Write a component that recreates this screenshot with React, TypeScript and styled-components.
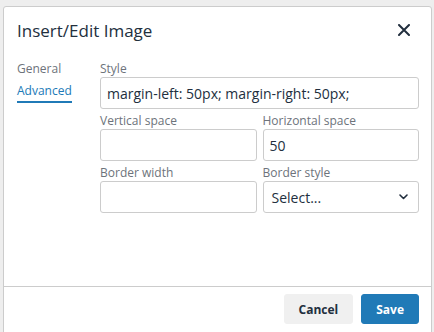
import React from "react";
import styled, { createGlobalStyle } from "styled-components";

const GlobalStyle = createGlobalStyle`
  html, body {
    margin: 0;
    padding: 0;
  }
  body {
    background: #eeeeee;
    font-family: "Open Sans", "Noto Sans", sans-serif;
    overflow: hidden;
  }
  * { box-sizing: border-box; }
`;

const Page = styled.div`
  height: 332px;
  padding: 6px 2px 0 3px;
`;

const Dialog = styled.div`
  height: 327px;
  background: #ffffff;
  border: 1px solid #cccccc;
  border-radius: 3px 3px 0 0;
  display: flex;
  flex-direction: column;
`;

const Header = styled.div`
  display: flex;
  align-items: center;
  justify-content: space-between;
  padding: 11px 15px 0 13px;
`;

const Title = styled.h1`
  margin: 0;
  font-size: 17px;
  line-height: 23px;
  font-weight: 400;
  color: #222f3e;
`;

const CloseButton = styled.button`
  width: 24px;
  height: 24px;
  padding: 0;
  border: 0;
  background: transparent;
  display: flex;
  align-items: center;
  justify-content: center;
  color: #222f3e;
`;

const Body = styled.div`
  flex: 1;
  display: flex;
  padding: 19px 12px 0 13px;
`;

const TabList = styled.div`
  width: 83px;
  display: flex;
  flex-direction: column;
  align-items: flex-start;
  gap: 2px;
`;

const Tab = styled.div<{ $active?: boolean }>`
  font-size: 12px;
  line-height: 16px;
  padding-bottom: 2px;
  border-bottom: 2px solid ${(p) => (p.$active ? "#207ab7" : "transparent")};
  color: ${(p) => (p.$active ? "#207ab7" : "#6d737b")};
`;

const Form = styled.div`
  flex: 1;
  display: flex;
  flex-direction: column;
  gap: 4px;
`;

const Grid = styled.div`
  display: grid;
  grid-template-columns: 1fr 1fr;
  column-gap: 6px;
  row-gap: 4px;
`;

const Field = styled.div`
  display: flex;
  flex-direction: column;
  min-width: 0;
`;

const Label = styled.label`
  font-size: 12px;
  line-height: 16px;
  color: #6d737b;
`;

const Input = styled.div`
  height: 32px;
  border: 1px solid #cccccc;
  border-radius: 3px;
  padding: 0 6px;
  display: flex;
  align-items: center;
  font-size: 14px;
  color: #222f3e;
  white-space: nowrap;
  overflow: hidden;
`;

const SelectBox = styled(Input)`
  justify-content: space-between;
  padding: 0 10px 0 8px;
`;

const Footer = styled.div`
  display: flex;
  justify-content: flex-end;
  gap: 8px;
  border-top: 1px solid #cccccc;
  padding: 7px 12px 8px;
`;

const Button = styled.button<{ $primary?: boolean }>`
  height: 30px;
  padding: 0 14px;
  border-radius: 3px;
  border: 1px solid ${(p) => (p.$primary ? "#207ab7" : "#f0f0f0")};
  background: ${(p) => (p.$primary ? "#207ab7" : "#f0f0f0")};
  color: ${(p) => (p.$primary ? "#ffffff" : "#222f3e")};
  font-family: "Open Sans", "Noto Sans", sans-serif;
  font-size: 12px;
  font-weight: 700;
`;

export default function App() {
  return (
    <>
      <GlobalStyle />
      <Page>
        <Dialog>
          <Header>
            <Title>Insert/Edit Image</Title>
            <CloseButton aria-label="Close">
              <svg width="12" height="12" viewBox="0 0 12 12">
                <path d="M1 1 L11 11 M11 1 L1 11" stroke="currentColor" strokeWidth="2" strokeLinecap="round" />
              </svg>
            </CloseButton>
          </Header>
          <Body>
            <TabList>
              <Tab>General</Tab>
              <Tab $active>Advanced</Tab>
            </TabList>
            <Form>
              <Field>
                <Label>Style</Label>
                <Input>margin-left: 50px; margin-right: 50px;</Input>
              </Field>
              <Grid>
                <Field>
                  <Label>Vertical space</Label>
                  <Input />
                </Field>
                <Field>
                  <Label>Horizontal space</Label>
                  <Input>50</Input>
                </Field>
                <Field>
                  <Label>Border width</Label>
                  <Input />
                </Field>
                <Field>
                  <Label>Border style</Label>
                  <SelectBox>
                    <span>Select...</span>
                    <svg width="9" height="6" viewBox="0 0 9 6">
                      <path d="M1 1 L4.5 4.5 L8 1" fill="none" stroke="#222f3e" strokeWidth="1.6" strokeLinecap="round" strokeLinejoin="round" />
                    </svg>
                  </SelectBox>
                </Field>
              </Grid>
            </Form>
          </Body>
          <Footer>
            <Button>Cancel</Button>
            <Button $primary>Save</Button>
          </Footer>
        </Dialog>
      </Page>
    </>
  );
}
